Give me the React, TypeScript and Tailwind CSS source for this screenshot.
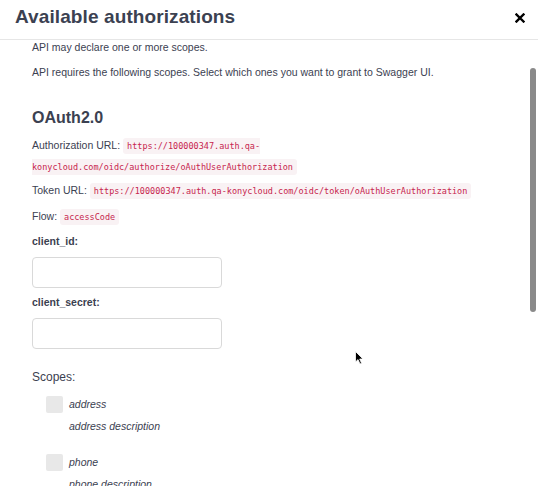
const mono = "font-['DejaVu_Sans_Mono','Liberation_Mono',monospace]";

const Code = ({ children }: { children: React.ReactNode }) => (
  <code className={`${mono} text-[8.5px] leading-[12px] text-[#c7254e] bg-[#f9f2f4] rounded-[3px] px-[4px] py-[3px]`}>
    {children}
  </code>
);

const Field = ({ label }: { label: string }) => (
  <div>
    <label className="block text-[10.5px] font-bold text-[#3b4151] leading-[14px]">{label}</label>
    <input
      type="text"
      className="block mt-[9px] w-[190px] h-[31px] border border-[#d9d9d9] rounded-[4px] bg-white outline-none"
    />
  </div>
);

const Scope = ({ name }: { name: string }) => (
  <div className="pl-[14px]">
    <div className="flex items-center gap-[6px] h-[17px]">
      <span className="w-[17px] h-[17px] rounded-[2px] bg-[#e8e8e8]" />
      <span className="italic text-[10.5px] text-[#3b4151]">{name}</span>
    </div>
    <p className="pl-[23px] mt-[6px] italic text-[10.5px] leading-[14px] text-[#3b4151]">
      {name} description
    </p>
  </div>
);

export default function App() {
  return (
    <div className="relative w-[538px] h-[486px] overflow-hidden bg-white font-['Liberation_Sans',Arial,sans-serif] text-[#3b4151]">
      <header className="h-[40px] flex items-center justify-between pl-[15px] pr-[13px] pb-[4px] border-b border-[#e6e6e6]">
        <h4 className="text-[19px] font-bold tracking-[0.1px]">Available authorizations</h4>
        <svg width="10" height="10" viewBox="0 0 10 10" className="mt-[1px]">
          <path d="M1.5 1.5 L8.5 8.5 M8.5 1.5 L1.5 8.5" stroke="#000" strokeWidth="2.4" strokeLinecap="square" />
        </svg>
      </header>

      <div className="pl-[32px] pr-[32px] text-[10.5px]">
        <p className="leading-[12px] mt-[1px]">API may declare one or more scopes.</p>
        <p className="leading-[12px] mt-[13px]">
          API requires the following scopes. Select which ones you want to grant to Swagger UI.
        </p>

        <h2 className="mt-[30px] text-[16px] font-bold leading-[20px]">OAuth2.0</h2>

        <p className="mt-[7px] leading-[21px]">
          Authorization URL: <Code>https://100000347.auth.qa-konycloud.com/oidc/authorize/oAuthUserAuthorization</Code>
        </p>
        <p className="mt-[3px] leading-[21px]">
          Token URL: <Code>https://100000347.auth.qa-konycloud.com/oidc/token/oAuthUserAuthorization</Code>
        </p>
        <p className="mt-[5px] leading-[21px]">
          Flow: <Code>accessCode</Code>
        </p>

        <div className="mt-[7px] flex flex-col gap-[7px]">
          <Field label="client_id:" />
          <Field label="client_secret:" />
        </div>

        <p className="mt-[21px] text-[12px] leading-[14px]">Scopes:</p>

        <div className="mt-[12px] flex flex-col gap-[21px]">
          <Scope name="address" />
          <Scope name="phone" />
        </div>
      </div>

      <div className="absolute left-[530px] top-[68px] w-[6px] h-[244px] rounded-full bg-[#8a8a8a]" />

      <svg className="absolute left-[355px] top-[351px]" width="10" height="15" viewBox="0 0 10 15">
        <path d="M0.5 0.5 L0.5 11 L3 8.6 L5 13 L6.6 12.3 L4.7 8 L8 8 Z" fill="#000" stroke="#fff" strokeWidth="0.8" />
      </svg>
    </div>
  );
}
